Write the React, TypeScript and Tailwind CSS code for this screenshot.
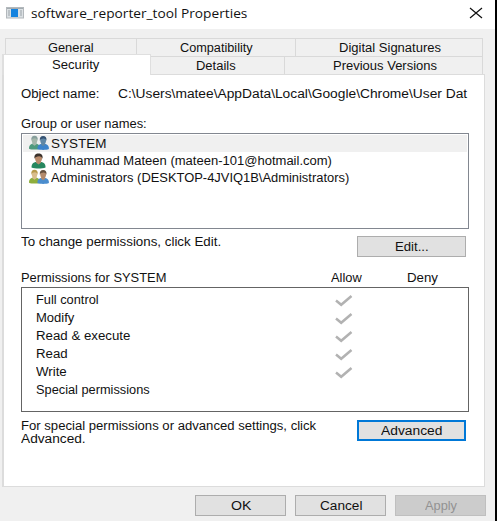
import { useLayoutEffect, useRef, useState } from 'react';
import type { ReactNode } from 'react';
import clsx from 'clsx';

// Dialog text is stretched horizontally to fill a known width.
const Label = ({ w, className, children }: { w: number; className?: string; children: ReactNode }) => {
  const ref = useRef<HTMLSpanElement>(null);
  const [scale, setScale] = useState(1);

  useLayoutEffect(() => {
    if (ref.current) setScale(w / ref.current.offsetWidth);
  }, [w]);

  return (
    <span className={clsx('block shrink-0 text-left whitespace-nowrap', className)} style={{ width: w }}>
      <span ref={ref} className="inline-block origin-left" style={{ transform: `scaleX(${scale})` }}>
        {children}
      </span>
    </span>
  );
};

const Button = ({ className, children }: { className?: string; children: ReactNode }) => (
  <button
    className={clsx(
      'flex h-[21px] shrink-0 items-center justify-center border',
      className ?? 'border-[#adadad] bg-[#e1e1e1]',
    )}
  >
    {children}
  </button>
);

const Person = ({ hair, skin, body }: { hair: string; skin: string; body: string }) => (
  <>
    <path d="M0 14c0-4 2-5.500 6-5.500s6 1.500 6 5.500c-3 1.300-9 1.300-12 0z" fill={body} />
    <path d="M4.300 7h3.400l.6 2.200L6 11 3.700 9.200z" fill={skin} />
    <ellipse cx="6" cy="5" rx="3" ry="3.800" fill={skin} />
    <path d="M2.600 5.500C2 2 3.500.3 6 .3s4 1.700 3.400 5.200C9 3.800 8 3.200 6.500 3 4.500 3 3 3.800 2.600 5.500z" fill={hair} />
  </>
);

const UserIcon = () => (
  <svg className="ml-2 h-4 w-[15px]" viewBox="0 0 14 16">
    <g transform="translate(0 .2) scale(1.170 1.020)">
      <Person hair="#3b322c" skin="#b98b6c" body="#26875f" />
    </g>
  </svg>
);

const GroupIcon = ({ system }: { system?: boolean }) => (
  <svg className="mt-[-1px] ml-[6px] h-4 w-5" viewBox="0 0 20 16">
    <g transform="translate(0 .5) scale(.92 .94)">
      {system ? (
        <Person hair="#879f9c" skin="#a5b7aa" body="#4f9a7d" />
      ) : (
        <Person hair="#b79a4c" skin="#d9bd8c" body="#8eae3d" />
      )}
    </g>
    <g transform="translate(8.400 .8) scale(.96 .94)">
      {system ? (
        <Person hair="#345273" skin="#5f87a6" body="#3d83cb" />
      ) : (
        <Person hair="#66513f" skin="#b48b6c" body="#4b8dce" />
      )}
    </g>
  </svg>
);

const principals = [
  { name: 'SYSTEM', w: 55, icon: <GroupIcon system />, selected: true },
  { name: 'Muhammad Mateen (mateen-101@hotmail.com)', w: 281, icon: <UserIcon /> },
  { name: 'Administrators (DESKTOP-4JVIQ1B\\Administrators)', w: 298, icon: <GroupIcon /> },
];

const permissions = [
  { name: 'Full control', w: 63, allow: true },
  { name: 'Modify', w: 38, allow: true },
  { name: 'Read & execute', w: 94, allow: true },
  { name: 'Read', w: 32, allow: true },
  { name: 'Write', w: 31, allow: true },
  { name: 'Special permissions', w: 114, allow: false },
];

const tab = 'flex items-center justify-center border-[#d9d9d9]';

const App = () => {
  return (
    <div className="flex h-[521px] w-[497px] flex-col overflow-hidden border-r-2 border-black bg-[#f0f0f0] font-['Liberation_Sans',Arial,sans-serif] text-[12px] leading-[16px] text-[#111]">
      <header className="flex h-[29px] shrink-0 items-center bg-white pl-[6px]">
        <svg className="mt-[-3px] h-[12px] w-[18px]" viewBox="0 0 18 12">
          <rect x=".5" y=".5" width="17" height="10.500" fill="#dce1e4" stroke="#b3b8bc" />
          <path d="M1 1.500h16" stroke="#a3abb0" />
          <path d="M2 4h2M2 6h2M2 8h2M14 4h2M14 6h2M14 8h2" stroke="#9ba3a9" />
          <rect x="5" y="2" width="7" height="8" fill="#1583df" />
        </svg>
        <Label w={216} className="ml-[7px] mt-[-1px] font-['Open_Sans',sans-serif]">
          software_reporter_tool Properties
        </Label>
        <svg className="mt-[-3px] ml-auto mr-[12px] h-[12px] w-[14px]" viewBox="0 0 14 12" fill="none" stroke="#111" strokeWidth="1.200">
          <path d="M1 1l12 10M13 1L1 11" />
        </svg>
      </header>

      <div className="mt-[9px] ml-[5px] flex h-[18px] w-[478px] shrink-0 border-t border-l border-r border-[#d9d9d9]">
        <div className={clsx(tab, 'w-[131px] border-r')}><Label w={46}>General</Label></div>
        <div className={clsx(tab, 'w-[159px] border-r')}><Label w={73}>Compatibility</Label></div>
        <div className={clsx(tab, 'flex-1 pl-[2px]')}><Label w={102}>Digital Signatures</Label></div>
      </div>
      <div className="ml-[2px] flex h-[18px] w-[481px] shrink-0 items-end">
        <div className="z-10 -mb-px flex h-[21px] w-[149px] items-center justify-center border-t border-r border-l-2 border-[#dfdfdf] bg-white pr-[3px]">
          <Label w={47}>Security</Label>
        </div>
        <div className={clsx(tab, 'h-[18px] w-[134px] border-t border-r pr-[3px]')}><Label w={40}>Details</Label></div>
        <div className={clsx(tab, 'h-[18px] flex-1 border-t border-r pl-[2px]')}><Label w={104}>Previous Versions</Label></div>
      </div>

      <main className="ml-[2px] flex h-[413px] w-[483px] shrink-0 flex-col border border-l-2 border-[#dcdcdc] bg-white pl-[17px]">
        <div className="mt-[11px] flex gap-[19px]">
          <Label w={78}>Object name:</Label>
          <Label w={349}>C:\Users\matee\AppData\Local\Google\Chrome\User Dat</Label>
        </div>
        <Label w={126} className="mt-[14px]">Group or user names:</Label>
        <div className="mt-px h-[96px] w-[448px] shrink-0 border border-[#828790] p-px">
          {principals.map((p) => (
            <div key={p.name} className={clsx('flex h-[17px] items-center', p.selected && 'bg-[#f0f0f0]')}>
              <div className="w-[28px]">{p.icon}</div>
              <Label w={p.w}>{p.name}</Label>
            </div>
          ))}
        </div>
        <div className="mt-[5px] flex h-[31px] shrink-0">
          <Label w={200}>To change permissions, click Edit.</Label>
          <div className="mt-[2px] ml-[136px] flex w-[109px] flex-col">
            <Button><Label w={34}>Edit...</Label></Button>
          </div>
        </div>
        <div className="mt-[5px] flex h-[17px] shrink-0">
          <Label w={145}>Permissions for SYSTEM</Label>
          <Label w={31} className="ml-[165px]">Allow</Label>
          <Label w={31} className="ml-[45px]">Deny</Label>
        </div>
        <div className="h-[125px] w-[448px] shrink-0 border border-[#646464] pt-[3px] pl-[14px]">
          {permissions.map((p) => (
            <div key={p.name} className="flex h-[18px] items-center">
              <div className="w-[299px]"><Label w={p.w}>{p.name}</Label></div>
              {p.allow && (
                <svg className="mt-[2px] h-[12px] w-[18px]" viewBox="0 0 18 12" fill="none" stroke="#b2b2b2" strokeWidth="2.500">
                  <path d="M1 5.500L6.200 9.800 16.500 1" />
                </svg>
              )}
            </div>
          ))}
        </div>
        <div className="mt-[6px] flex">
          <div className="mt-[2px] w-[336px] leading-[13px]">
            <Label w={295}>For special permissions or advanced settings, click</Label>
            <Label w={65}>Advanced.</Label>
          </div>
          <div className="mt-[2px] flex w-[109px] flex-col">
            <Button className="border-2 border-[#0078d7] bg-[#e1e1e1]"><Label w={61}>Advanced</Label></Button>
          </div>
        </div>
      </main>

      <footer className="mt-[8px] ml-[195px] grid shrink-0 grid-cols-[91px_91px_91px] gap-[9px]">
        <Button><Label w={20}>OK</Label></Button>
        <Button><Label w={42}>Cancel</Label></Button>
        <Button className="border-[#bfbfbf] bg-[#cccccc] text-[#929292]"><Label w={32}>Apply</Label></Button>
      </footer>
    </div>
  );
};

export default App;
